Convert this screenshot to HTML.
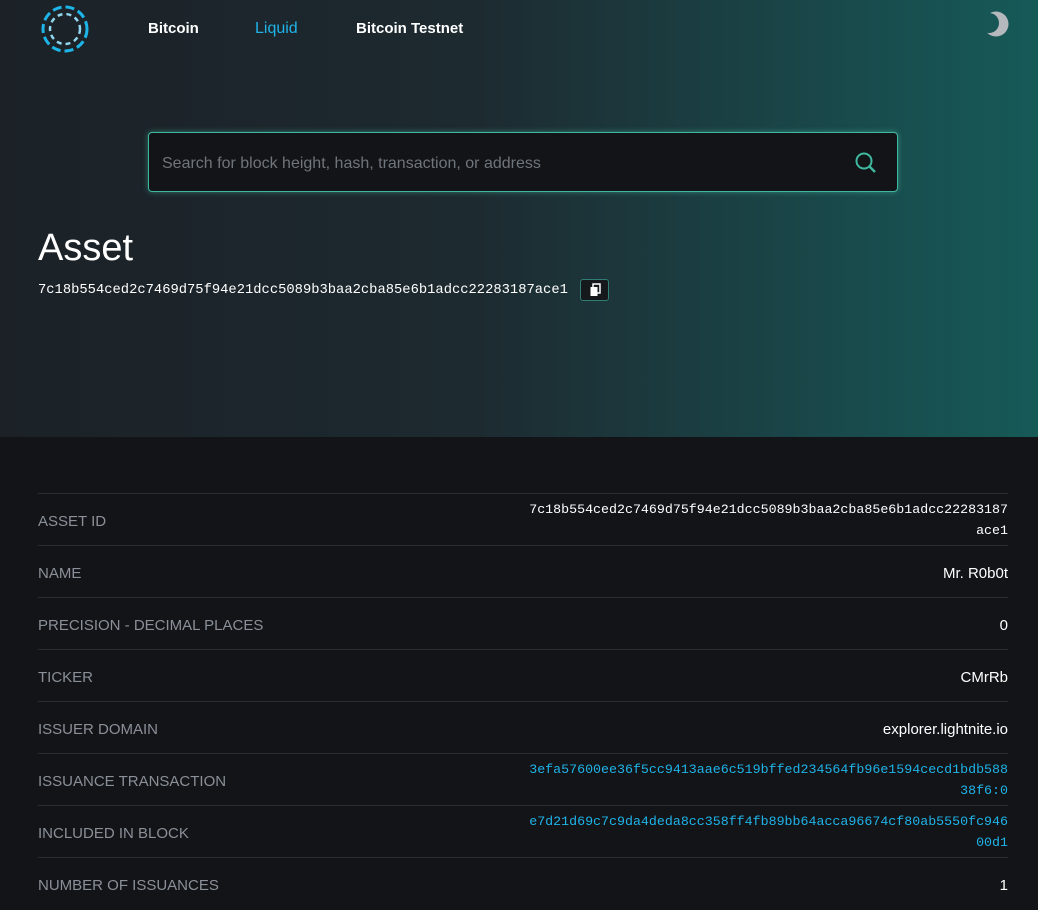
<!DOCTYPE html>
<html><head><meta charset="utf-8"><style>
*{margin:0;padding:0;box-sizing:border-box}
body{width:1038px;height:900px;overflow:hidden;background:#131417;font-family:"Liberation Sans",sans-serif;color:#fff}
.hdr{position:absolute;left:0;top:0;width:1038px;height:437px;background:linear-gradient(90deg,#1b2127 0%,#1d2a30 45%,#1a4447 75%,#165a58 100%)}
.nav a{position:absolute;top:20px;font-size:15px;font-weight:bold;color:#fff;text-decoration:none}
.search{position:absolute;left:148px;top:132px;width:750px;height:60px;background:#131417;border:1px solid #3fb8a0;border-radius:4px;box-shadow:0 0 6px rgba(80,200,170,.5)}
.search span{position:absolute;left:13px;top:22px;font-size:16px;color:#6f757c}
h1{position:absolute;left:38px;top:227px;font-size:38px;font-weight:normal}
.hash{position:absolute;left:38px;top:283px;font-family:"Liberation Mono",monospace;font-size:13.8px;color:#fff}
.copy{position:absolute;left:580px;top:279px;width:29px;height:22px;border:1px solid #2f7d74;border-radius:3px;background:#15191c}
table{position:absolute;left:38px;top:493px;width:970px;border-collapse:collapse}
td{height:52px;border-top:1px solid #2a2c30;font-size:15px;vertical-align:middle;padding-top:3px}
td.k{color:#8a9099}
td.v{text-align:right;color:#fff}
td.m{font-family:"Liberation Mono",monospace;font-size:13.3px;line-height:21px;padding-top:1px}
td.l{color:#1fb3e8}
</style></head><body>
<div class="hdr"></div>
<svg style="position:absolute;left:40px;top:4px" width="50" height="50" viewBox="0 0 50 50"><circle cx="25" cy="25" r="22" fill="none" stroke="#1db4e8" stroke-width="3" stroke-dasharray="9 4"/><circle cx="25" cy="25" r="15" fill="none" stroke="#8fd6ee" stroke-width="2.5" stroke-dasharray="5 4"/></svg>
<div class="nav"><a style="left:148px">Bitcoin</a><a style="left:255px;color:#1fb3e8;font-weight:normal;font-size:16px">Liquid</a><a style="left:356px">Bitcoin Testnet</a></div>
<svg style="position:absolute;left:982px;top:10px" width="28" height="28" viewBox="0 0 28 28"><defs><mask id="mm"><rect width="28" height="28" fill="#fff"/><circle cx="7" cy="13" r="10" fill="#000"/></mask></defs><circle cx="14" cy="14" r="12.5" fill="#b5b8bc" mask="url(#mm)"/></svg>
<div class="search"><span>Search for block height, hash, transaction, or address</span>
<svg style="position:absolute;left:704px;top:18px" width="26" height="26" viewBox="0 0 26 26"><circle cx="11" cy="10" r="7.5" fill="none" stroke="#3fb8a0" stroke-width="2"/><path d="M16.5 15.5 L22 21" stroke="#3fb8a0" stroke-width="2.4"/></svg></div>
<h1>Asset</h1>
<div class="hash">7c18b554ced2c7469d75f94e21dcc5089b3baa2cba85e6b1adcc22283187ace1</div>
<div class="copy"><svg style="position:absolute;left:8px;top:3px" width="13" height="15" viewBox="0 0 13 15"><rect x="4" y="1" width="7" height="9" fill="none" stroke="#fff" stroke-width="1.5"/><rect x="1.5" y="4" width="7" height="9" fill="#fff"/></svg></div>
<table>
<tr><td class="k">ASSET ID</td><td class="v m">7c18b554ced2c7469d75f94e21dcc5089b3baa2cba85e6b1adcc22283187<br>ace1</td></tr>
<tr><td class="k">NAME</td><td class="v">Mr. R0b0t</td></tr>
<tr><td class="k">PRECISION - DECIMAL PLACES</td><td class="v">0</td></tr>
<tr><td class="k">TICKER</td><td class="v">CMrRb</td></tr>
<tr><td class="k">ISSUER DOMAIN</td><td class="v">explorer.lightnite.io</td></tr>
<tr><td class="k">ISSUANCE TRANSACTION</td><td class="v m l">3efa57600ee36f5cc9413aae6c519bffed234564fb96e1594cecd1bdb588<br>38f6:0</td></tr>
<tr><td class="k">INCLUDED IN BLOCK</td><td class="v m l">e7d21d69c7c9da4deda8cc358ff4fb89bb64acca96674cf80ab5550fc946<br>00d1</td></tr>
<tr><td class="k">NUMBER OF ISSUANCES</td><td class="v">1</td></tr>
</table>
</body></html>
